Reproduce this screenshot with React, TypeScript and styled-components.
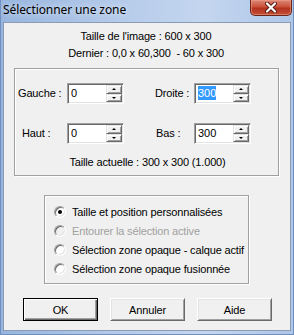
import React from "react";
import styled, { createGlobalStyle, css } from "styled-components";

const GlobalStyle = createGlobalStyle`
  html, body {
    margin: 0;
    padding: 0;
    background: #f0f0f0;
  }
  body {
    font-family: "Liberation Sans", Arial, sans-serif;
    font-size: 11px;
    letter-spacing: -0.15px;
    color: #000;
  }
`;

const Window = styled.div`
  width: 294px;
  height: 335px;
  box-sizing: border-box;
  display: flex;
  flex-direction: column;
  background: linear-gradient(to right, #97b5df 0%, #b8cdeb 45%, #c4d6ef 70%, #aec6e8 100%);
  border-left: 1px solid #6f8fbf;
  border-right: 1px solid #6f8fbf;
  border-bottom: 1px solid #6f8fbf;
`;

const TitleBar = styled.div`
  height: 22px;
  display: flex;
  justify-content: space-between;
  align-items: flex-start;
  padding: 0 1px 0 2px;
`;

const Title = styled.span`
  font-family: "Noto Sans", "Open Sans", sans-serif;
  font-size: 12px;
  line-height: 20px;
  color: #000;
  text-shadow: 0 0 6px rgba(255, 255, 255, 0.9);
  letter-spacing: -0.1px;
`;

const CloseButton = styled.div`
  flex-shrink: 0;
  width: 42px;
  height: 16px;
  box-sizing: border-box;
  border: 1px solid #6b2418;
  border-top: none;
  border-radius: 0 0 5px 5px;
  background: linear-gradient(to bottom, #dc8a78 0%, #c9503b 45%, #b3321d 55%, #c24e38 100%);
  box-shadow: inset 0 0 0 1px rgba(240, 160, 140, 0.55);
  display: flex;
  align-items: center;
  justify-content: center;
`;

const Client = styled.div`
  flex: 1;
  margin: 0 2px 3px 2px;
  border: 1px solid #8a9bb3;
  background: #f0f0f0;
  display: flex;
  flex-direction: column;
  align-items: flex-start;
  padding-top: 5px;
  white-space: nowrap;
`;

const InfoLine = styled.div`
  align-self: stretch;
  text-align: center;
  line-height: 17px;
  padding-right: 2px;
`;

const GroupBox = styled.div<{ $left: number; $width: number; $top: number }>`
  box-sizing: border-box;
  margin-left: ${(p) => p.$left}px;
  margin-top: ${(p) => p.$top}px;
  width: ${(p) => p.$width}px;
  border: 1px solid #a0a0a0;
  box-shadow: inset 1px 1px 0 #fff, 1px 1px 0 #fff;
`;

const CoordBox = styled(GroupBox)`
  padding: 14px 0 4px 3px;
  display: flex;
  flex-direction: column;
  gap: 19px;
`;

const CoordRow = styled.div`
  display: flex;
  gap: 31px;
`;

const Field = styled.div`
  display: flex;
  align-items: center;
`;

const FieldLabel = styled.label<{ $width: number; $indent?: number }>`
  width: ${(p) => p.$width}px;
  box-sizing: border-box;
  padding-left: ${(p) => p.$indent ?? 0}px;
  margin-top: -2px;
`;

const SpinBox = styled.div`
  width: 57px;
  height: 21px;
  box-sizing: border-box;
  display: flex;
  border: 1px solid;
  border-color: #a0a0a0 #fff #fff #a0a0a0;
  box-shadow: inset 1px 1px 0 #696969, inset -1px -1px 0 #e3e3e3;
  background: #fff;
  padding: 1px 1px 1px 2px;
`;

const SpinText = styled.div`
  flex: 1;
  line-height: 17px;
  padding-left: 1px;
  letter-spacing: 0;
`;

const Selected = styled.span`
  background: #3399ff;
  color: #fff;
  display: inline-block;
  line-height: 14px;
`;

const SpinButtons = styled.div`
  width: 16px;
  display: flex;
  flex-direction: column;
`;

const SpinButton = styled.div`
  flex: 1;
  box-sizing: border-box;
  background: #f0f0f0;
  border: 1px solid;
  border-color: #e3e3e3 #696969 #696969 #e3e3e3;
  box-shadow: inset 1px 1px 0 #fff, inset -1px -1px 0 #a0a0a0;
  display: flex;
  align-items: center;
  justify-content: center;
`;

const Arrow = styled.div<{ $down?: boolean }>`
  width: 0;
  height: 0;
  border-left: 2px solid transparent;
  border-right: 2px solid transparent;
  ${(p) =>
    p.$down
      ? css`border-top: 2px solid #000;`
      : css`border-bottom: 2px solid #000;`}
`;

const CurrentSize = styled.div`
  text-align: center;
  line-height: 17px;
  margin-top: -9px;
  padding-right: 1px;
`;

const RadioBox = styled(GroupBox)`
  padding: 6px 0 5px 9px;
  display: flex;
  flex-direction: column;
`;

const RadioRow = styled.div<{ $disabled?: boolean }>`
  height: 19px;
  display: flex;
  align-items: center;
  gap: 6px;
  color: ${(p) => (p.$disabled ? "#a0a0a0" : "#000")};
`;

const RadioCircle = styled.div<{ $disabled?: boolean }>`
  width: 12px;
  height: 12px;
  box-sizing: border-box;
  border-radius: 50%;
  border: 1px solid;
  border-color: #a0a0a0 #fff #fff #a0a0a0;
  box-shadow: inset 1px 1px 0 #696969, inset -1px -1px 0 #e3e3e3;
  background: ${(p) => (p.$disabled ? "#f0f0f0" : "#fff")};
  display: flex;
  align-items: center;
  justify-content: center;
  flex-shrink: 0;
`;

const RadioDot = styled.div`
  width: 4px;
  height: 4px;
  border-radius: 50%;
  background: #000;
`;

const ButtonRow = styled.div`
  align-self: stretch;
  display: flex;
  justify-content: center;
  gap: 12px;
  margin-top: 14px;
  padding-left: 1px;
`;

const Button = styled.div<{ $default?: boolean }>`
  width: 75px;
  height: 23px;
  box-sizing: border-box;
  display: flex;
  align-items: center;
  justify-content: center;
  background: #f0f0f0;
  border: 1px solid;
  ${(p) =>
    p.$default
      ? css`
          border-color: #000;
          box-shadow: inset 1px 1px 0 #fff, inset -1px -1px 0 #696969, inset -2px -2px 0 #a0a0a0;
        `
      : css`
          border-color: #fff #696969 #696969 #fff;
          box-shadow: inset 1px 1px 0 #e3e3e3, inset -1px -1px 0 #a0a0a0;
        `}
`;

const Spin: React.FC<{ value: React.ReactNode }> = ({ value }) => (
  <SpinBox>
    <SpinText>{value}</SpinText>
    <SpinButtons>
      <SpinButton>
        <Arrow />
      </SpinButton>
      <SpinButton>
        <Arrow $down />
      </SpinButton>
    </SpinButtons>
  </SpinBox>
);

const options = [
  { label: "Taille et position personnalisées", checked: true },
  { label: "Entourer la sélection active", disabled: true },
  { label: "Sélection zone opaque - calque actif" },
  { label: "Sélection zone opaque fusionnée" },
];

export default function App() {
  return (
    <>
      <GlobalStyle />
      <Window>
        <TitleBar>
          <Title>Sélectionner une zone</Title>
          <CloseButton>
            <svg width="14" height="11" viewBox="0 0 14 11">
              <path d="M3 1.5 L11 9.5 M11 1.5 L3 9.5" stroke="#5a1a12" strokeWidth="4" strokeLinecap="round" />
              <path d="M3 1.5 L11 9.5 M11 1.5 L3 9.5" stroke="#fff" strokeWidth="2.2" strokeLinecap="round" />
            </svg>
          </CloseButton>
        </TitleBar>
        <Client>
          <InfoLine>Taille de l'image : 600 x 300</InfoLine>
          <InfoLine>Dernier : 0,0 x 60,300&nbsp; - 60 x 300</InfoLine>
          <CoordBox $left={10} $width={265} $top={6}>
            <CoordRow>
              <Field>
                <FieldLabel $width={49}>Gauche :</FieldLabel>
                <Spin value="0" />
              </Field>
              <Field>
                <FieldLabel $width={39}>Droite :</FieldLabel>
                <Spin value={<Selected>300</Selected>} />
              </Field>
            </CoordRow>
            <CoordRow>
              <Field>
                <FieldLabel $width={49} $indent={4}>Haut :</FieldLabel>
                <Spin value="0" />
              </Field>
              <Field>
                <FieldLabel $width={39} $indent={1}>Bas :</FieldLabel>
                <Spin value="300" />
              </Field>
            </CoordRow>
            <CurrentSize>Taille actuelle : 300 x 300 (1.000)</CurrentSize>
          </CoordBox>
          <RadioBox $left={40} $width={205} $top={19}>
            {options.map((o) => (
              <RadioRow key={o.label} $disabled={o.disabled}>
                <RadioCircle $disabled={o.disabled}>{o.checked && <RadioDot />}</RadioCircle>
                <span>{o.label}</span>
              </RadioRow>
            ))}
          </RadioBox>
          <ButtonRow>
            <Button $default>OK</Button>
            <Button>Annuler</Button>
            <Button>Aide</Button>
          </ButtonRow>
        </Client>
      </Window>
    </>
  );
}
